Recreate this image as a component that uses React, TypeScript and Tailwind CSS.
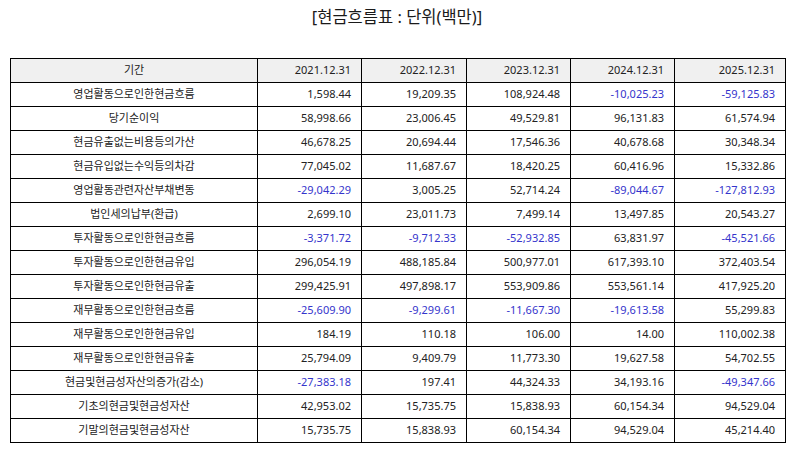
const years = ["2021.12.31", "2022.12.31", "2023.12.31", "2024.12.31", "2025.12.31"];

const rows: Array<[string, string[]]> = [
  ["영업활동으로인한현금흐름", ["1,598.44", "19,209.35", "108,924.48", "-10,025.23", "-59,125.83"]],
  ["당기순이익", ["58,998.66", "23,006.45", "49,529.81", "96,131.83", "61,574.94"]],
  ["현금유출없는비용등의가산", ["46,678.25", "20,694.44", "17,546.36", "40,678.68", "30,348.34"]],
  ["현금유입없는수익등의차감", ["77,045.02", "11,687.67", "18,420.25", "60,416.96", "15,332.86"]],
  ["영업활동관련자산부채변동", ["-29,042.29", "3,005.25", "52,714.24", "-89,044.67", "-127,812.93"]],
  ["법인세의납부(환급)", ["2,699.10", "23,011.73", "7,499.14", "13,497.85", "20,543.27"]],
  ["투자활동으로인한현금흐름", ["-3,371.72", "-9,712.33", "-52,932.85", "63,831.97", "-45,521.66"]],
  ["투자활동으로인한현금유입", ["296,054.19", "488,185.84", "500,977.01", "617,393.10", "372,403.54"]],
  ["투자활동으로인한현금유출", ["299,425.91", "497,898.17", "553,909.86", "553,561.14", "417,925.20"]],
  ["재무활동으로인한현금흐름", ["-25,609.90", "-9,299.61", "-11,667.30", "-19,613.58", "55,299.83"]],
  ["재무활동으로인한현금유입", ["184.19", "110.18", "106.00", "14.00", "110,002.38"]],
  ["재무활동으로인한현금유출", ["25,794.09", "9,409.79", "11,773.30", "19,627.58", "54,702.55"]],
  ["현금및현금성자산의증가(감소)", ["-27,383.18", "197.41", "44,324.33", "34,193.16", "-49,347.66"]],
  ["기초의현금및현금성자산", ["42,953.02", "15,735.75", "15,838.93", "60,154.34", "94,529.04"]],
  ["기말의현금및현금성자산", ["15,735.75", "15,838.93", "60,154.34", "94,529.04", "45,214.40"]],
];

const colWidths = ["w-[247px]", "w-[104px]", "w-[105px]", "w-[104px]", "w-[104px]", "w-[111px]"];

export default function App() {
  return (
    <div
      className="w-[794px] h-[452px] bg-white text-[#222]"
      style={{ fontFamily: '"Noto Sans", "Noto Sans CJK KR", sans-serif' }}
    >
      <h1 className="pt-[3px] h-[58px] text-center text-[16.5px] leading-[28px] text-[#1a1a1a] font-normal">
        [현금흐름표 : 단위(백만)]
      </h1>
      <table className="ml-[10px] w-[775px] border-collapse table-fixed text-[11px]">
        <colgroup>
          {colWidths.map((w, i) => (
            <col key={i} className={w} />
          ))}
        </colgroup>
        <thead>
          <tr className="h-[24px] bg-[#f0f0f0]">
            <th className="border border-black font-normal text-center p-0">기간</th>
            {years.map((y) => (
              <th key={y} className="border border-black font-normal text-right pr-[10px] p-0">
                {y}
              </th>
            ))}
          </tr>
        </thead>
        <tbody>
          {rows.map(([label, vals]) => (
            <tr key={label} className="h-[24px]">
              <td className="border border-black text-center p-0">{label}</td>
              {vals.map((v, i) => (
                <td
                  key={i}
                  className={
                    v.startsWith("-")
                      ? "border border-black text-right pr-[10px] p-0 text-[#3535cc]"
                      : "border border-black text-right pr-[10px] p-0"
                  }
                >
                  {v}
                </td>
              ))}
            </tr>
          ))}
        </tbody>
      </table>
    </div>
  );
}
